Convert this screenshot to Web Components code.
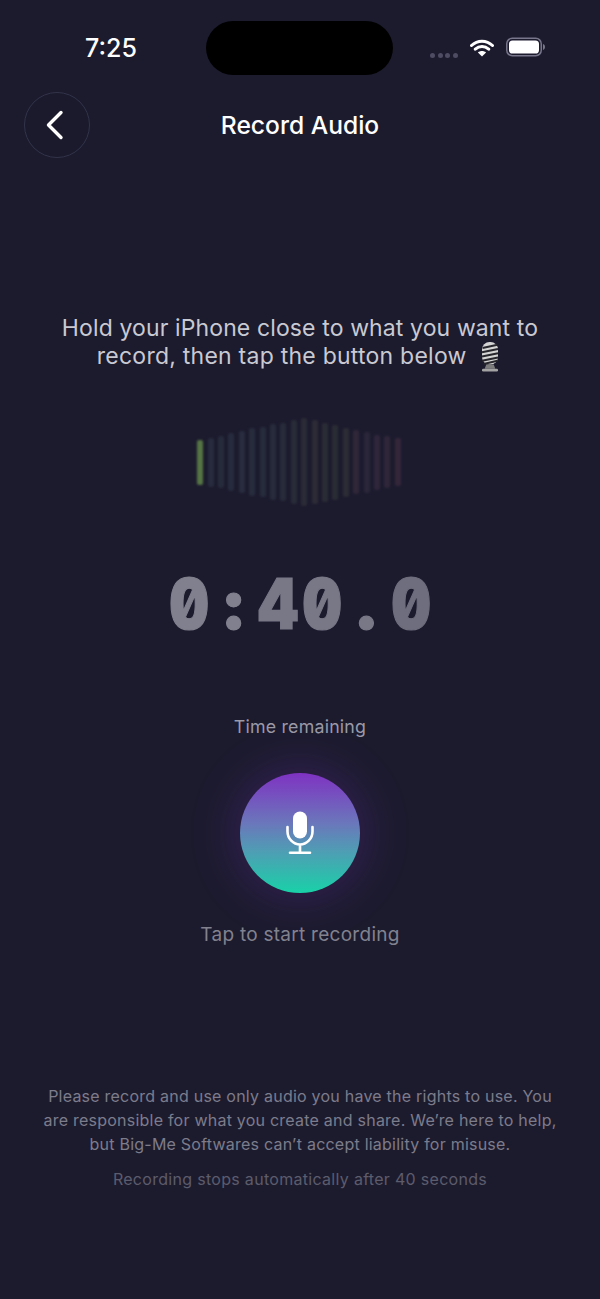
<!DOCTYPE html>
<html lang="en"><head><meta charset="utf-8"><title>Record Audio</title>
<style>
html,body{margin:0;height:100%;background:#1c1b2e}
body{width:600px;height:1299px;overflow:hidden;font-family:Inter,"Noto Sans",sans-serif}
record-screen{display:block}
</style></head><body>
<record-screen></record-screen>
<script>
function def(name,html){customElements.define(name,class extends HTMLElement{constructor(){super();this.attachShadow({mode:'open'}).innerHTML=typeof html==='function'?html():html;}});}
def('status-bar',`<style>
:host{display:grid;grid-template-columns:206px 187px 207px;height:54px;padding-top:21px;color:#fff}
.t{display:flex;align-items:center;justify-content:flex-start;padding-left:85px;font:500 25px/1 Inter,sans-serif;height:54px}
.i{background:#000;border-radius:27px;height:54px}
.r{display:flex;align-items:center;height:54px;padding-left:37px;gap:0}
.d{display:flex;gap:2.5px;margin:14px 12px 0 0}.d b{width:5px;height:5px;border-radius:50%;background:#4d4c62}
</style><div class="t">7:25</div><div class="i"></div><div class="r"><div class="d"><b></b><b></b><b></b><b></b></div>
<svg width="24" height="18" viewBox="0 0 24 18" style="margin-right:12px;margin-top:-1px"><path d="M1.5 6.5C7.5 .7 16.5 .7 22.5 6.5M5.3 10.2C9.3 6.5 14.7 6.5 18.7 10.2" fill="none" stroke="#fff" stroke-width="3" stroke-linecap="round"/><path d="M12 17.6l-4.1-4.2c2.4-2 5.8-2 8.2 0z" fill="#fff"/></svg>
<svg width="40" height="20" viewBox="0 0 40 20" style="margin-top:-2px"><rect x=".75" y="1.25" width="34.5" height="17.5" rx="5.5" fill="none" stroke="#77768a" stroke-width="1.5"/><rect x="3" y="3.5" width="30" height="13" rx="3.6" fill="#fff"/><path d="M37 7c1.400.4 2 1.600 2 3s-.6 2.600-2 3z" fill="#77768a"/></svg></div>`);
def('nav-header',`<style>
:host{display:grid;grid-template-columns:66px 1fr 66px;align-items:center;margin:17px 24px 0;height:66px}
button{all:unset;box-sizing:border-box;width:66px;height:66px;border-radius:50%;border:1px solid #33334a;background:#1a1a2c;display:flex;align-items:center;justify-content:center}
h1{margin:0;text-align:center;font:500 24.6px/1 Inter,sans-serif;color:#fff}
</style><button aria-label="Back"><svg width="22" height="32" viewBox="0 0 22 32" style="margin-left:-4px"><path d="M17 3.500 4.500 16l12.500 12.500" fill="none" stroke="#fff" stroke-width="3.400" stroke-linecap="round" stroke-linejoin="round"/></svg></button><h1><slot></slot></h1><span></span>`);
def('prompt-text',`<style>
:host{display:block;margin-top:156px;text-align:center;font:400 23px/28px Inter,sans-serif;color:#c9c9d2;letter-spacing:.12px}
svg{vertical-align:-1px;margin:-8px 0 -8px 4px}
</style><slot></slot> <svg width="26" height="32" viewBox="0 0 24 30"><rect x="4.500" y="1" width="15" height="21" rx="7" fill="#d4d4d4"/><path d="M5 6.500 19 3.500M4.500 10.500l15-3M4.500 14.500l15-3M4.500 18.500l15-3M6 21.500l13-3" stroke="#26262c" stroke-width="1.900"/><path d="M8.500 22h7l1.500 4H7z" fill="#7d7d7d"/><rect x="4.500" y="26" width="15" height="2.600" rx="1.200" fill="#a3a3a3"/></svg>`);
const bars=[[45,'#557444'],[49,'#272b3d'],[52,'#262b3c'],[58,'#262b3d'],[62,'#282c3e'],[68,'#272c3d'],[70,'#262c3c'],[76,'#272b3b'],[78,'#272b3a'],[84,'#282b38'],[88,'#2a2b36'],[84,'#2c2b36'],[79,'#2a2c35'],[75,'#2a2c34'],[69,'#2c2c35'],[64,'#302739'],[61,'#2b263a'],[55,'#30263b'],[52,'#30263a'],[48,'#34263a']];
def('wave-form',()=>`<style>
:host{display:flex;justify-content:center;align-items:center;gap:4.400px;height:96px;margin-top:44px;padding-right:2px}
i{width:6px;border-radius:2px;filter:blur(.8px)}
</style>`+bars.map(([h,c])=>`<i style="height:${h}px;background:${c}"></i>`).join(''));
def('timer-display',`<style>
:host{display:flex;justify-content:center;margin-top:47px;height:94px;font:900 70px/94px Inter,sans-serif;color:#80808e;font-feature-settings:"tnum","zero";-webkit-text-stroke:1.2px currentColor}
span{display:block;width:44.3px;text-align:center}
span.n{transform:scaleX(.87)}
span>b{font-weight:inherit;margin:0 -12px}
span:nth-child(n+4){color:#787887}span:last-child{color:#6e6e7e}
</style><span class="n"><b>0</b></span><span><b>:</b></span><span class="n"><b>4</b></span><span class="n"><b>0</b></span><span><b>.</b></span><span class="n"><b>0</b></span>`);
def('hint-text',`<style>
:host{display:block;text-align:center;font:400 var(--s,17.8px)/24px Inter,sans-serif;color:var(--c,#9a9aa8);letter-spacing:var(--l,.2px);margin-top:var(--m,0)}
</style><slot></slot>`);
def('record-button',`<style>
:host{display:flex;justify-content:center;margin-top:34px}
button{all:unset;width:120px;height:120px;border-radius:50%;background:linear-gradient(180deg,#7f32c2 0%,#6a77bb 42%,#4f9db4 65%,#19d1a8 100%);box-shadow:0 0 42px 10px rgba(118,48,190,.22);display:flex;align-items:center;justify-content:center}
</style><button aria-label="Record"><svg width="30" height="44" viewBox="0 0 30 44"><rect x="8" y=".5" width="14" height="27" rx="7" fill="#fff"/><path d="M2.500 16v4.500c0 7.200 5.800 13 12.500 13s12.500-5.800 12.500-13v-4.500M15 33.500v7M5 41.800h20" fill="none" stroke="#fff" stroke-width="2.600" stroke-linecap="round"/></svg></button>`);
def('legal-note',`<style>
:host{display:block;margin-top:137px;text-align:center;font:400 16px/24px Inter,sans-serif;color:#7c7c8b;letter-spacing:.23px}
</style><slot></slot>`);
def('record-screen',`<style>:host{display:block;height:1299px}</style>
<status-bar></status-bar>
<nav-header>Record Audio</nav-header>
<prompt-text>Hold your iPhone close to what you want to<br><span style="letter-spacing:.24px">record, then tap the button below</span></prompt-text>
<wave-form></wave-form>
<timer-display></timer-display>
<hint-text style="--m:64px">Time remaining</hint-text>
<record-button></record-button>
<hint-text style="--m:30px;--s:19px;--c:#82828f;--l:.27px">Tap to start recording</hint-text>
<legal-note>Please record and use only audio you have the rights to use. You<br>are responsible for what you create and share. We’re here to help,<br>but Big-Me Softwares can’t accept liability for misuse.</legal-note>
<hint-text style="--m:11px;--s:16px;--c:#5c5c6c;--l:.3px">Recording stops automatically after 40 seconds</hint-text>`);
</script></body></html>
